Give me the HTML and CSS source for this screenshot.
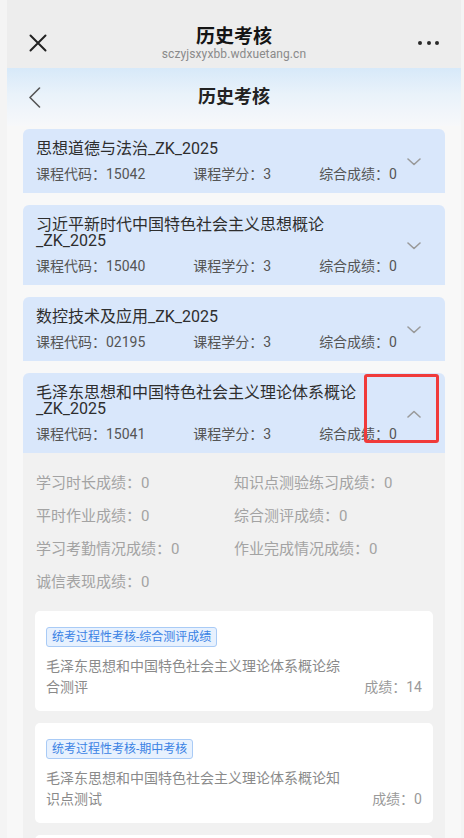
FILE: index.html
```html
<!DOCTYPE html>
<html lang="zh-CN">
<head>
<meta charset="utf-8">
<title>历史考核</title>
<link rel="stylesheet" href="styles.css">
</head>
<body>
<div class="phone">
  <div class="topbar">
    <div class="tb-left">
      <svg class="close-icon" width="18" height="18" viewBox="0 0 18 18"><path d="M1.5 1.5 L16.5 16.5 M16.5 1.5 L1.5 16.5" stroke="#222" stroke-width="2" stroke-linecap="round" fill="none"/></svg>
    </div>
    <div class="tb-title">
      <div class="tb-name">历史考核</div>
      <div class="tb-url">sczyjsxyxbb.wdxuetang.cn</div>
    </div>
    <div class="tb-right">
      <span class="dot"></span><span class="dot"></span><span class="dot"></span>
    </div>
  </div>

  <div class="header">
    <div class="hd-left">
      <svg width="13" height="21" viewBox="0 0 13 21"><path d="M11.5 1 L2 10.5 L11.5 20" stroke="#555" stroke-width="1.6" fill="none" stroke-linecap="round" stroke-linejoin="round"/></svg>
    </div>
    <div class="hd-title">历史考核</div>
    <div class="hd-right"></div>
  </div>

  <div class="content">
    <div class="course">
      <div class="course-head">
        <div class="course-main">
          <div class="course-title">思想道德与法治_ZK_2025</div>
          <div class="course-info"><span>课程代码：15042</span><span>课程学分：3</span><span>综合成绩：0</span></div>
        </div>
        <svg class="arrow" width="14" height="8" viewBox="0 0 14 8"><path d="M1 1 L7 6.5 L13 1" stroke="#9a9a9a" stroke-width="1.6" fill="none" stroke-linecap="round" stroke-linejoin="round"/></svg>
      </div>
    </div>

    <div class="course">
      <div class="course-head">
        <div class="course-main">
          <div class="course-title">习近平新时代中国特色社会主义思想概论_ZK_2025</div>
          <div class="course-info"><span>课程代码：15040</span><span>课程学分：3</span><span>综合成绩：0</span></div>
        </div>
        <svg class="arrow" width="14" height="8" viewBox="0 0 14 8"><path d="M1 1 L7 6.5 L13 1" stroke="#9a9a9a" stroke-width="1.6" fill="none" stroke-linecap="round" stroke-linejoin="round"/></svg>
      </div>
    </div>

    <div class="course">
      <div class="course-head">
        <div class="course-main">
          <div class="course-title">数控技术及应用_ZK_2025</div>
          <div class="course-info"><span>课程代码：02195</span><span>课程学分：3</span><span>综合成绩：0</span></div>
        </div>
        <svg class="arrow" width="14" height="8" viewBox="0 0 14 8"><path d="M1 1 L7 6.5 L13 1" stroke="#9a9a9a" stroke-width="1.6" fill="none" stroke-linecap="round" stroke-linejoin="round"/></svg>
      </div>
    </div>

    <div class="course">
      <div class="course-head">
        <div class="course-main">
          <div class="course-title">毛泽东思想和中国特色社会主义理论体系概论_ZK_2025</div>
          <div class="course-info"><span>课程代码：15041</span><span>课程学分：3</span><span>综合成绩：0</span></div>
        </div>
        <svg class="arrow" width="14" height="8" viewBox="0 0 14 8"><path d="M1 7 L7 1.5 L13 7" stroke="#9a9a9a" stroke-width="1.6" fill="none" stroke-linecap="round" stroke-linejoin="round"/></svg>
      </div>
      <div class="course-body">
        <div class="stats">
          <div>学习时长成绩：0</div>
          <div>知识点测验练习成绩：0</div>
          <div>平时作业成绩：0</div>
          <div>综合测评成绩：0</div>
          <div>学习考勤情况成绩：0</div>
          <div>作业完成情况成绩：0</div>
          <div>诚信表现成绩：0</div>
        </div>

        <div class="item">
          <span class="tag">统考过程性考核-综合测评成绩</span>
          <div class="item-row">
            <div class="item-desc">毛泽东思想和中国特色社会主义理论体系概论综合测评</div>
            <div class="item-score">成绩：14</div>
          </div>
        </div>

        <div class="item">
          <span class="tag">统考过程性考核-期中考核</span>
          <div class="item-row">
            <div class="item-desc">毛泽东思想和中国特色社会主义理论体系概论知识点测试</div>
            <div class="item-score">成绩：0</div>
          </div>
        </div>

        <div class="item item-cut"></div>
      </div>
    </div>
  </div>
</div>
<div class="highlight"></div>
</body>
</html>
```

FILE: styles.css
```css
* { box-sizing: border-box; }
html, body { margin: 0; padding: 0; }
body {
  background: #f4f4f4;
  font-family: Roboto, "Noto Sans CJK SC", sans-serif;
  color: #333;
  height: 838px;
  overflow: hidden;
}
.phone {
  margin-left: 7px;
  width: 454px;
  background: #f8f8f8;
  min-height: 838px;
}
.topbar {
  height: 68px;
  background: #ededed;
  padding-top: 18px;
  display: grid;
  grid-template-columns: 60px 1fr 60px;
  align-items: center;
}
.tb-left { padding-left: 22px; display: flex; align-items: center; }
.close-icon { display: block; }
.tb-title { text-align: center; }
.tb-name { font-size: 19px; line-height: 22px; font-weight: 700; color: #141414; }
.tb-url { font-size: 12px; line-height: 12px; color: #8a8a8a; letter-spacing: 0.1px; }
.tb-right { display: flex; gap: 4.5px; justify-content: flex-end; padding-right: 22px; }
.dot { width: 4px; height: 4px; border-radius: 50%; background: #2a2a2a; }

.header {
  height: 58px;
  background: linear-gradient(180deg, #d7e9f9 0%, #e9f2fa 45%, #f7f8fa 100%);
  display: grid;
  grid-template-columns: 60px 1fr 60px;
  align-items: center;
}
.hd-left { padding-left: 21px; display: flex; }
.hd-title { text-align: center; font-size: 18px; font-weight: 700; color: #222; line-height: 24px; }

.content { padding: 3px 16px 0; }
.course { margin-bottom: 12px; }
.course-head {
  background: #d9e7fb;
  border-radius: 6px 6px 0 0;
  padding: 12px 0 11px 13px;
  display: flex;
  align-items: center;
}
.course-main { flex: 1; min-width: 0; }
.course-title {
  font-size: 16px;
  line-height: 16px;
  color: #2e2e2e;
  max-width: 345px;
}
.course-info {
  margin-top: 9px;
  display: flex;
  justify-content: space-between;
  font-size: 14px;
  line-height: 16px;
  color: #555;
}
.arrow { flex: none; margin: 0 24px 0 10px; display: block; }

.course-body { background: #f1f1f1; padding: 0 12px 1px; }
.stats {
  display: grid;
  grid-template-columns: 1fr 1fr;
  padding: 14px 1px 12px;
  font-size: 15px;
  line-height: 33px;
  color: #a3a3a3;
}
.item {
  background: #fff;
  border-radius: 5px;
  padding: 15px 11px 13px;
  margin-bottom: 12px;
}
.item-cut { height: 40px; }
.tag {
  display: inline-block;
  font-size: 12px;
  line-height: 18px;
  padding: 0 5px;
  border: 1px solid #a9cbf6;
  background: #e7f1fe;
  color: #3a82e4;
  border-radius: 3px;
}
.item-row {
  margin-top: 9px;
  display: flex;
  justify-content: space-between;
  align-items: flex-end;
}
.item-desc { width: 300px; font-size: 14px; line-height: 21px; color: #8a8a8a; }
.item-score { font-size: 14px; line-height: 21px; color: #9a9a9a; white-space: nowrap; }

.highlight {
  position: absolute;
  left: 364px;
  top: 374px;
  width: 75px;
  height: 69px;
  border: 3px solid #f03a3a;
  border-radius: 3px;
}
```
